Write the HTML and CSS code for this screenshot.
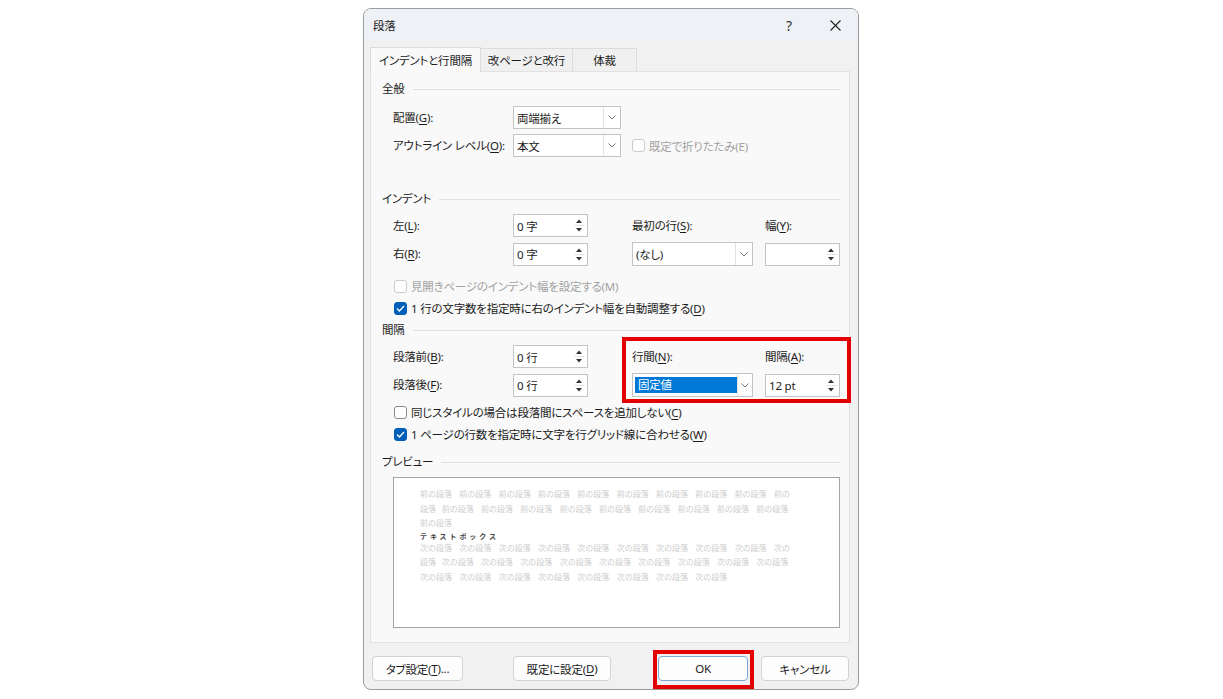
FILE: index.html
```html
<!DOCTYPE html>
<html lang="ja">
<head>
  <meta charset="UTF-8">
  <title>段落</title>
  <link rel="stylesheet" href="styles.css">
</head>
<body>
  <div class="page">
    <div class="dialog">
      <div class="titlebar">
        <span class="title">段落</span>
        <span class="cap help">?</span>
        <span class="cap close">
          <svg width="11" height="11" viewBox="0 0 11 11"><path d="M0.5 0.5 L10.5 10.5 M10.5 0.5 L0.5 10.5" stroke="#222" stroke-width="1.1" fill="none"/></svg>
        </span>
      </div>

      <div class="tabs">
        <div class="tab active t1">インデントと行間隔</div>
        <div class="tab t2">改ページと改行</div>
        <div class="tab t3">体裁</div>
      </div>

      <div class="panel">
        <div class="group g1"><span>全般</span></div>
        <div class="form f1">
          <div class="label">配置(<u>G</u>):</div>
          <div class="select w108"><span class="val">両端揃え</span><span class="caret"><svg width="8" height="5" viewBox="0 0 8 5"><path d="M0.5 0.5 L4 4 L7.5 0.5" stroke="#777" fill="none"/></svg></span></div>
          <div></div><div></div>
          <div class="label">アウトライン レベル(<u>O</u>):</div>
          <div class="select w108"><span class="val">本文</span><span class="caret"><svg width="8" height="5" viewBox="0 0 8 5"><path d="M0.5 0.5 L4 4 L7.5 0.5" stroke="#777" fill="none"/></svg></span></div>
          <div class="check disabled span2"><span class="box"></span>既定で折りたたみ(E)</div>
        </div>

        <div class="group g2"><span>インデント</span></div>
        <div class="form f2">
          <div class="label">左(<u>L</u>):</div>
          <div class="spin"><span class="val">0 字</span><span class="arrows"><svg width="6" height="4" viewBox="0 0 6 4"><path d="M0 4 L3 0.5 L6 4Z" fill="#333"/></svg><i></i><svg width="6" height="4" viewBox="0 0 6 4"><path d="M0 0 L3 3.5 L6 0Z" fill="#333"/></svg></span></div>
          <div class="label">最初の行(<u>S</u>):</div>
          <div class="label">幅(<u>Y</u>):</div>
          <div class="label">右(<u>R</u>):</div>
          <div class="spin"><span class="val">0 字</span><span class="arrows"><svg width="6" height="4" viewBox="0 0 6 4"><path d="M0 4 L3 0.5 L6 4Z" fill="#333"/></svg><i></i><svg width="6" height="4" viewBox="0 0 6 4"><path d="M0 0 L3 3.5 L6 0Z" fill="#333"/></svg></span></div>
          <div class="select w121 tall"><span class="val">(なし)</span><span class="caret"><svg width="8" height="5" viewBox="0 0 8 5"><path d="M0.5 0.5 L4 4 L7.5 0.5" stroke="#777" fill="none"/></svg></span></div>
          <div class="spin"><span class="val"></span><span class="arrows"><svg width="6" height="4" viewBox="0 0 6 4"><path d="M0 4 L3 0.5 L6 4Z" fill="#333"/></svg><i></i><svg width="6" height="4" viewBox="0 0 6 4"><path d="M0 0 L3 3.5 L6 0Z" fill="#333"/></svg></span></div>
        </div>

        <div class="checks c1">
          <div class="check disabled"><span class="box"></span>見開きページのインデント幅を設定する(M)</div>
          <div class="check"><span class="box on"><svg width="9" height="7" viewBox="0 0 9 7"><path d="M1 3.5 L3.4 6 L8 1" stroke="#fff" stroke-width="1.3" fill="none"/></svg></span>1 行の文字数を指定時に右のインデント幅を自動調整する(<u>D</u>)</div>
        </div>

        <div class="group g3"><span>間隔</span></div>
        <div class="form f3">
          <div class="label">段落前(<u>B</u>):</div>
          <div class="spin"><span class="val">0 行</span><span class="arrows"><svg width="6" height="4" viewBox="0 0 6 4"><path d="M0 4 L3 0.5 L6 4Z" fill="#333"/></svg><i></i><svg width="6" height="4" viewBox="0 0 6 4"><path d="M0 0 L3 3.5 L6 0Z" fill="#333"/></svg></span></div>
          <div class="label">行間(<u>N</u>):</div>
          <div class="label">間隔(<u>A</u>):</div>
          <div class="label">段落後(<u>F</u>):</div>
          <div class="spin"><span class="val">0 行</span><span class="arrows"><svg width="6" height="4" viewBox="0 0 6 4"><path d="M0 4 L3 0.5 L6 4Z" fill="#333"/></svg><i></i><svg width="6" height="4" viewBox="0 0 6 4"><path d="M0 0 L3 3.5 L6 0Z" fill="#333"/></svg></span></div>
          <div class="select w121 tall"><span class="val"><span class="sel">固定値</span></span><span class="caret"><svg width="8" height="5" viewBox="0 0 8 5"><path d="M0.5 0.5 L4 4 L7.5 0.5" stroke="#777" fill="none"/></svg></span></div>
          <div class="spin"><span class="val">12 pt</span><span class="arrows"><svg width="6" height="4" viewBox="0 0 6 4"><path d="M0 4 L3 0.5 L6 4Z" fill="#333"/></svg><i></i><svg width="6" height="4" viewBox="0 0 6 4"><path d="M0 0 L3 3.5 L6 0Z" fill="#333"/></svg></span></div>
        </div>

        <div class="checks c2">
          <div class="check"><span class="box"></span>同じスタイルの場合は段落間にスペースを追加しない(<u>C</u>)</div>
          <div class="check"><span class="box on"><svg width="9" height="7" viewBox="0 0 9 7"><path d="M1 3.5 L3.4 6 L8 1" stroke="#fff" stroke-width="1.3" fill="none"/></svg></span>1 ページの行数を指定時に文字を行グリッド線に合わせる(<u>W</u>)</div>
        </div>

        <div class="group g4"><span>プレビュー</span></div>
        <div class="preview">
          <div class="line"><span class="u">前の段落</span><span class="u">前の段落</span><span class="u">前の段落</span><span class="u">前の段落</span><span class="u">前の段落</span><span class="u">前の段落</span><span class="u">前の段落</span><span class="u">前の段落</span><span class="u">前の段落</span><span>前の</span></div>
          <div class="line"><span class="h">段落</span><span class="u">前の段落</span><span class="u">前の段落</span><span class="u">前の段落</span><span class="u">前の段落</span><span class="u">前の段落</span><span class="u">前の段落</span><span class="u">前の段落</span><span class="u">前の段落</span><span class="u">前の段落</span></div>
          <div class="line"><span class="u">前の段落</span></div>
          <div class="line text">テキストボックス</div>
          <div class="line"><span class="u">次の段落</span><span class="u">次の段落</span><span class="u">次の段落</span><span class="u">次の段落</span><span class="u">次の段落</span><span class="u">次の段落</span><span class="u">次の段落</span><span class="u">次の段落</span><span class="u">次の段落</span><span>次の</span></div>
          <div class="line"><span class="h">段落</span><span class="u">次の段落</span><span class="u">次の段落</span><span class="u">次の段落</span><span class="u">次の段落</span><span class="u">次の段落</span><span class="u">次の段落</span><span class="u">次の段落</span><span class="u">次の段落</span><span class="u">次の段落</span></div>
          <div class="line"><span class="u">次の段落</span><span class="u">次の段落</span><span class="u">次の段落</span><span class="u">次の段落</span><span class="u">次の段落</span><span class="u">次の段落</span><span class="u">次の段落</span><span class="u">次の段落</span></div>
        </div>

        <!-- annotation frame -->
        <div class="mark mark-spacing"></div>
      </div>

      <div class="buttons">
        <div class="btn b-tab">タブ設定(<u>T</u>)...</div>
        <div class="btn b-def">既定に設定(<u>D</u>)</div>
        <div class="btn b-ok">OK<span class="mark mark-ok"></span></div>
        <div class="btn b-cancel">キャンセル</div>
      </div>
    </div>
  </div>
</body>
</html>
```

FILE: styles.css
```css
* {
  box-sizing: border-box;
}

body {
  margin: 0;
  background: #fff;
  font-family: "Noto Sans", "Noto Sans CJK JP", sans-serif;
  font-size: 11.5px;
  letter-spacing: -0.2px;
  color: #1b1b1b;
  font-feature-settings: "palt";
}

u {
  text-decoration-thickness: 1px;
  text-underline-offset: 2px;
}

.page {
  padding: 8px 0 0 363px;
}

.dialog {
  width: 496px;
  height: 682px;
  background: #f1f1f1;
  border: 1px solid #9c9c9c;
  border-radius: 8px;
  display: flex;
  flex-direction: column;
}

.titlebar {
  height: 32px;
  flex: none;
  display: flex;
  align-items: center;
  background: #eef2f6;
  border-radius: 7px 7px 0 0;
  padding-left: 9px;
}

.title {
  flex: 1;
}

.cap {
  width: 46px;
  height: 32px;
  display: flex;
  align-items: center;
  justify-content: center;
}

.help {
  font-size: 14px;
  color: #333;
}

.tabs {
  display: flex;
  align-items: flex-start;
  height: 24px;
  margin: 6px 0 0 6px;
  position: relative;
  z-index: 1;
}

.tab {
  height: 23px;
  margin-top: 1px;
  border: 1px solid #dcdcdc;
  border-bottom: none;
  background: #f0f0f0;
  display: flex;
  align-items: center;
  justify-content: center;
}

.tab + .tab {
  border-left: none;
}

.tab.active {
  height: 25px;
  margin-top: 0;
  background: #f9f9f9;
}

.t1 { width: 111px; }
.t2 { width: 92px; }
.t3 { width: 64px; }

.panel {
  position: relative;
  width: 480px;
  height: 572px;
  margin-left: 6px;
  background: #f9f9f9;
  border: 1px solid #e2e2e2;
  padding: 0 9px 0 11px;
}

.group {
  display: flex;
  align-items: center;
  height: 16px;
  line-height: 16px;
}

.group::after {
  content: "";
  flex: 1;
  height: 1px;
  background: #e0e0e0;
  margin-left: 8px;
}

.g1 { margin-top: 9px; }
.g2 { margin-top: 34px; }
.g3 { margin-top: 4px; }
.g4 { margin-top: 10px; }

.form {
  display: grid;
  grid-template-columns: 120px 119px 133px 75px;
  grid-auto-rows: 23px;
  row-gap: 5px;
  align-items: center;
  margin-left: 11px;
}

.f1 { margin-top: 9px; }
.f2 { margin-top: 7px; grid-template-rows: 23px 24px; }
.f3 { margin-top: 7px; grid-template-rows: 23px 24px; }

.label {
  line-height: 16px;
  white-space: nowrap;
}

.select,
.spin {
  height: 23px;
  background: #fff;
  border: 1px solid #c4c4c4;
  display: flex;
}

.select.tall {
  height: 24px;
}

.w108 { width: 108px; }
.w121 { width: 121px; }
.spin { width: 75px; }

.val {
  flex: 1;
  padding-left: 3px;
  display: flex;
  align-items: center;
  white-space: nowrap;
}

.caret {
  width: 17px;
  border-left: 1px solid #e2e2e2;
  display: flex;
  align-items: center;
  justify-content: center;
}

.sel {
  background: #0078d7;
  color: #fff;
  width: 102px;
  height: 16px;
  line-height: 16px;
  margin-left: -1px;
  padding-left: 3px;
}

.arrows {
  width: 16px;
  display: flex;
  flex-direction: column;
  align-items: center;
  justify-content: center;
  gap: 2px;
}

.arrows i {
  width: 11px;
  height: 1px;
  background: #e4e4e4;
}

.checks {
  margin-left: 12px;
  display: flex;
  flex-direction: column;
  gap: 2px;
}

.c1 { margin-top: 10px; }
.c2 { margin-top: 5px; }

.check {
  height: 20px;
  display: flex;
  align-items: center;
  white-space: nowrap;
}

.span2 {
  grid-column: span 2;
}

.box {
  width: 13px;
  height: 13px;
  border: 1px solid #8a8a8a;
  border-radius: 3px;
  background: #fff;
  margin-right: 4px;
  display: flex;
  align-items: center;
  justify-content: center;
  flex: none;
}

.box.on {
  background: #005fb8;
  border-color: #005fb8;
}

.check.disabled {
  color: #a2a2a2;
}

.check.disabled .box {
  border-color: #cccccc;
}

.preview {
  width: 447px;
  height: 151px;
  margin: 7px 0 0 11px;
  background: #fff;
  border: 1px solid #a3a3a3;
  padding: 9px 0 0 26px;
  font-family: "Noto Sans CJK JP", sans-serif;
  font-size: 8px;
  letter-spacing: 0;
  color: #cdcdcd;
  font-feature-settings: normal;
}

.line {
  height: 14.5px;
  line-height: 14.5px;
  white-space: nowrap;
}

.u {
  display: inline-block;
  width: 39.33px;
}

.h {
  display: inline-block;
  width: 21.7px;
}

.line.text {
  height: 10px;
  line-height: 10px;
  font-size: 7px;
  letter-spacing: 2.9px;
  color: #444;
  font-weight: bold;
}

.mark {
  position: absolute;
  border: 4px solid #e50000;
}

.mark-spacing {
  left: 251px;
  top: 265px;
  width: 229px;
  height: 66px;
}

.buttons {
  display: flex;
  margin-top: 13px;
  padding-left: 8px;
}

.btn {
  position: relative;
  height: 25px;
  border: 1px solid #d2d2d2;
  border-radius: 4px;
  background: #fdfdfd;
  display: flex;
  align-items: center;
  justify-content: center;
  white-space: nowrap;
}

.b-tab { width: 91px; }
.b-def { width: 98px; margin-left: 50px; }
.b-ok { width: 90px; margin-left: 47px; border-color: #7ea7d3; }
.b-cancel { width: 88px; margin-left: 13px; }

.mark-ok {
  left: -6px;
  top: -7px;
  right: -7px;
  bottom: -9px;
}
```
